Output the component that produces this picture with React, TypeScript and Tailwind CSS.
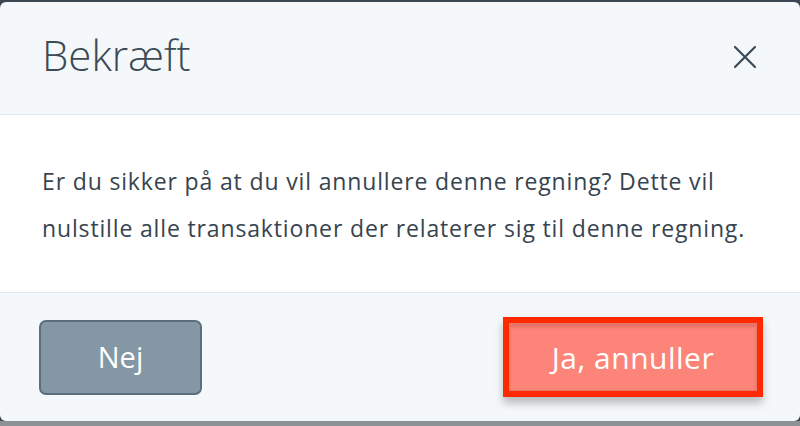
import React from "react";

export default function App() {
  return (
    <div className="w-[800px] h-[426px] bg-[#3b4752] flex flex-col overflow-hidden" style={{ fontFamily: '"Open Sans", "Noto Sans", sans-serif' }}>
      <div className="h-[2px] shrink-0" />
      <div className="w-[800px] h-[419px] bg-[#f5f8fb] rounded-[6px] flex flex-col overflow-hidden">
        <div className="h-[113px] shrink-0 flex items-center justify-between pl-[42px] pr-[42px] border-b border-[#e3e8ed]">
          <h1 className="text-[42px] font-light text-[#3c4a56] leading-none -mt-[6px]">Bekræft</h1>
          <svg width="26" height="26" viewBox="0 0 26 26" className="mt-[-2px]">
            <path d="M3 3 L23 23 M23 3 L3 23" stroke="#3c4a56" strokeWidth="2.2" strokeLinecap="round" />
          </svg>
        </div>
        <div className="h-[178px] shrink-0 bg-white border-b border-[#e3e8ed] pl-[42px] pr-[20px] flex items-center">
          <p className="text-[23px] leading-[47px] tracking-[0.85px] text-[#37444f] whitespace-nowrap mt-[3px]">
            Er du sikker på at du vil annullere denne regning? Dette vil
            <br />
            nulstille alle transaktioner der relaterer sig til denne regning.
          </p>
        </div>
        <div className="flex-1 flex items-center justify-between pl-[39px] pr-[37px]">
          <button className="w-[163px] h-[75px] rounded-[7px] bg-[#8497a4] border-2 border-[#5a6e7d] text-white text-[29px] flex items-center justify-center">
            Nej
          </button>
          <div className="border-[6px] border-[#ff2a00] shadow-[0_6px_8px_rgba(0,0,0,0.25)]">
            <button className="w-[248px] h-[68px] bg-[#fd8479] border border-[#e8786e] text-white text-[30px] tracking-[0.5px] flex items-center justify-center shadow-[inset_0_3px_3px_rgba(170,70,60,0.3)]">
              Ja, annuller
            </button>
          </div>
        </div>
      </div>
      <div className="flex-1 bg-[#8c9195]" />
    </div>
  );
}
